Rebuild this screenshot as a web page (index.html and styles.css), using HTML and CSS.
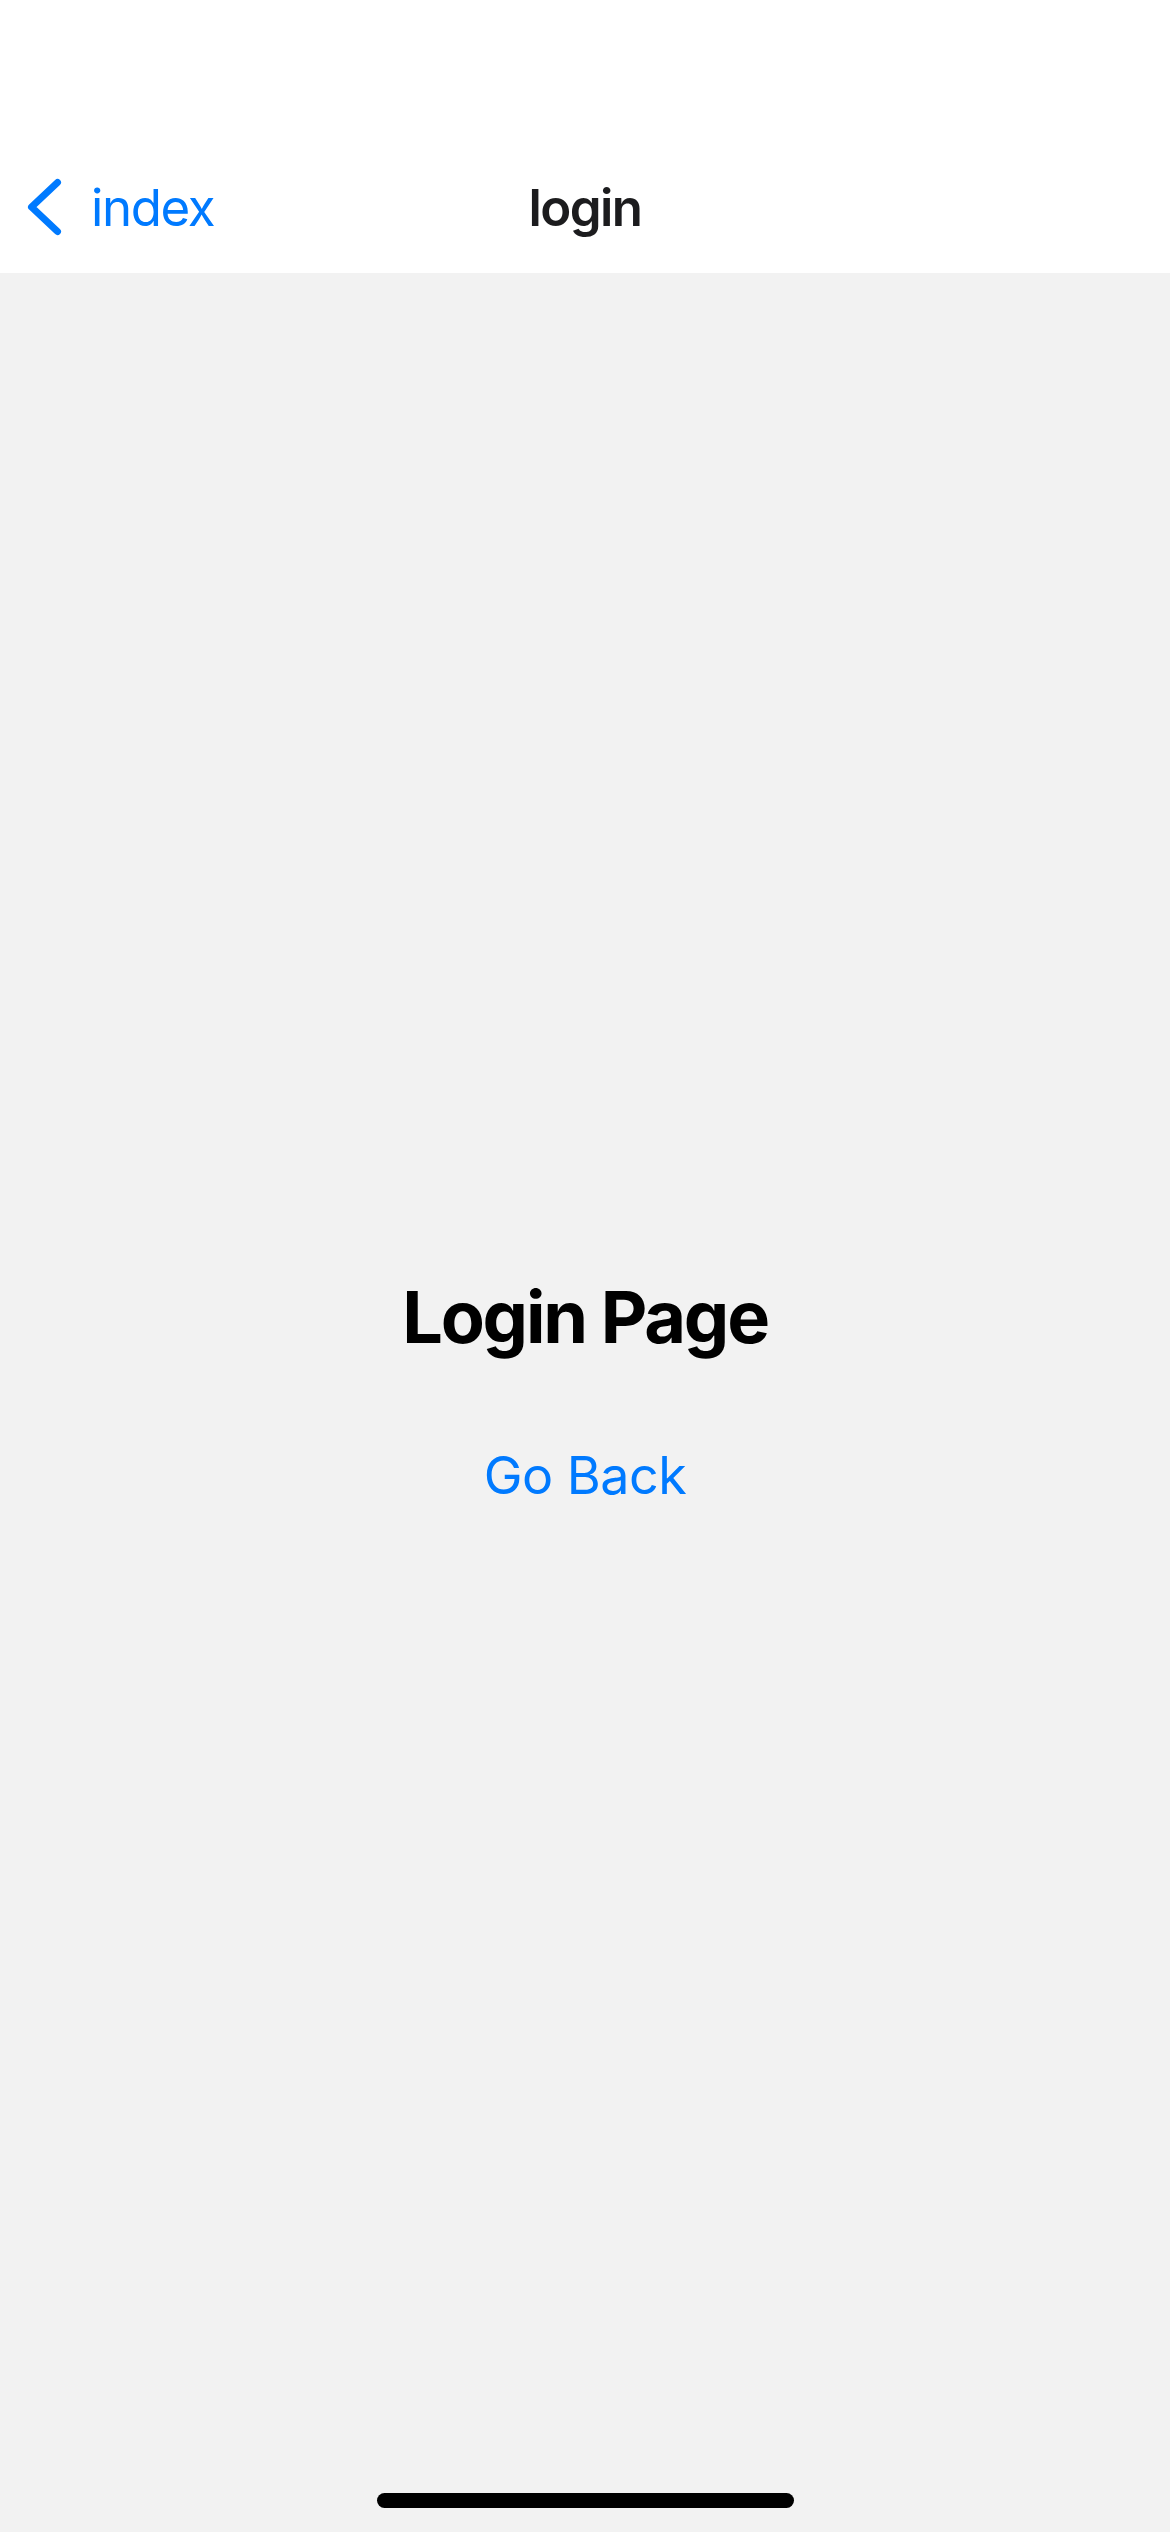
FILE: index.html
```html
<!DOCTYPE html>
<html lang="en">
<head>
<meta charset="utf-8">
<title>login</title>
<link rel="stylesheet" href="styles.css">
</head>
<body>
<div class="screen">
  <header class="header">
    <div class="status-bar"></div>
    <nav class="nav-bar">
      <a class="back" href="#">
        <svg class="chevron" width="40" height="62" viewBox="0 0 40 62" aria-hidden="true">
          <path d="M33.5 6.5 L7.5 31 L33.5 55.5" fill="none" stroke="#007aff" stroke-width="7" stroke-linecap="round" stroke-linejoin="round"/>
        </svg>
        <span class="back-label">index</span>
      </a>
      <h1 class="nav-title">login</h1>
    </nav>
  </header>
  <main class="content">
    <h2 class="page-title">Login Page</h2>
    <a class="go-back" href="#">Go Back</a>
  </main>
  <div class="home-indicator-wrap"><div class="home-indicator"></div></div>
</div>
</body>
</html>
```
FILE: styles.css
```css
* { box-sizing: border-box; }
html, body {
  margin: 0;
  padding: 0;
  width: 1170px;
  height: 2532px;
  overflow: hidden;
  font-family: Inter, "Noto Sans", "Liberation Sans", sans-serif;
  background: #f2f2f2;
}
.screen {
  display: flex;
  flex-direction: column;
  height: 2532px;
}
.header {
  background: #ffffff;
  height: 273px;
  display: flex;
  flex-direction: column;
}
.status-bar { height: 141px; }
.nav-bar {
  position: relative;
  height: 132px;
  display: flex;
  align-items: center;
}
.back {
  display: flex;
  align-items: center;
  padding-left: 24px;
  text-decoration: none;
  color: #007aff;
}
.chevron { display: block; }
.back-label {
  margin-left: 27px;
  font-size: 51px;
  font-weight: 400;
  letter-spacing: -1.4px;
  line-height: 1;
}
.nav-title {
  position: absolute;
  left: 0;
  right: 0;
  text-align: center;
  margin: 0;
  font-size: 51px;
  font-weight: 600;
  color: #1c1c1e;
  letter-spacing: -1.6px;
  line-height: 1;
  pointer-events: none;
}
.content {
  flex: 1;
  display: flex;
  flex-direction: column;
  align-items: center;
  justify-content: center;
  padding-bottom: 24px;
}
.page-title {
  margin: 0;
  font-size: 72px;
  font-weight: 700;
  color: #000;
  letter-spacing: -2.2px;
  line-height: 1.2;
}
.go-back {
  margin-top: 84px;
  font-size: 52px;
  font-weight: 400;
  color: #007aff;
  text-decoration: none;
  line-height: 1.2;
  letter-spacing: -0.5px;
}
.home-indicator-wrap {
  height: 0;
  position: relative;
}
.home-indicator {
  position: absolute;
  left: 377px;
  top: -39px;
  width: 417px;
  height: 15px;
  border-radius: 8px;
  background: #000;
}
```
